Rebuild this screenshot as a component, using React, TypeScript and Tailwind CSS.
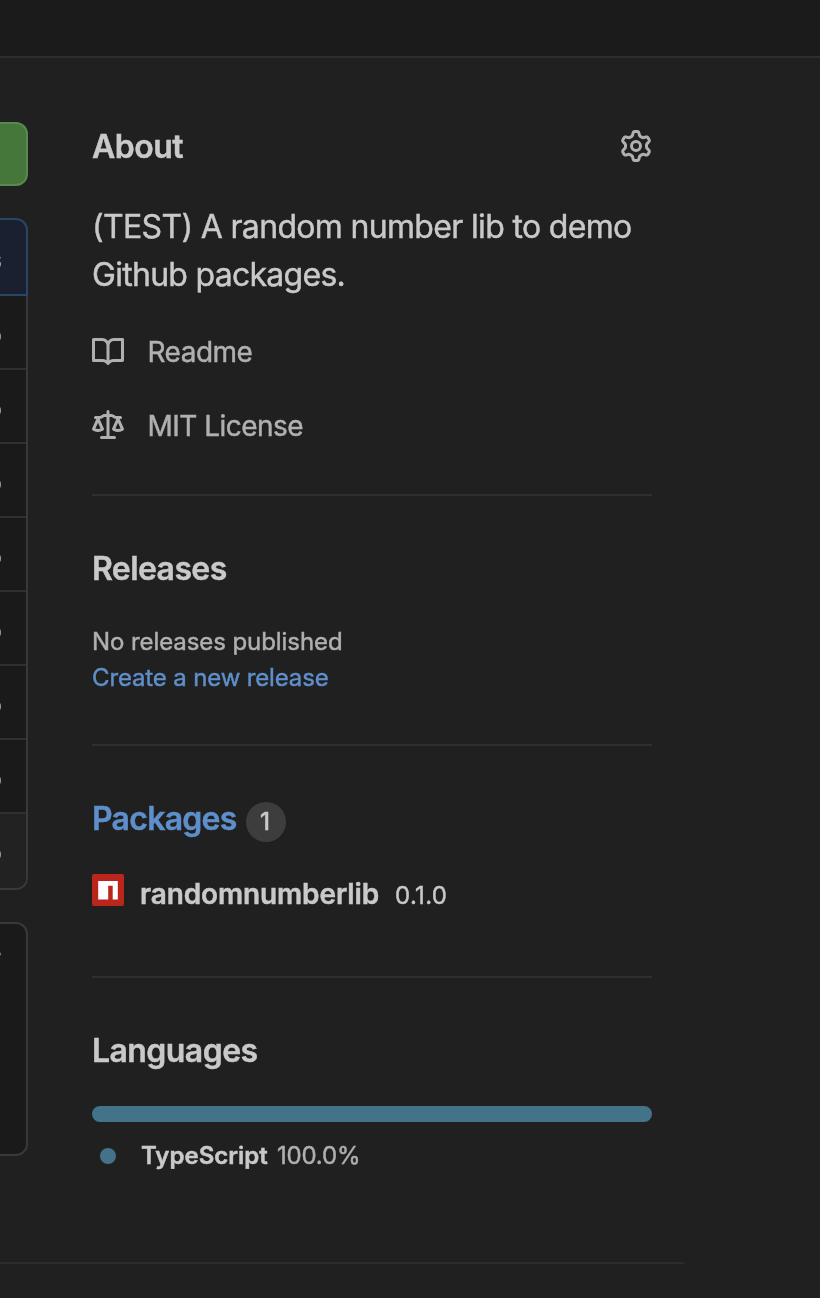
import type { ReactNode } from "react";

function Icon({ d, className }: { d: string; className?: string }) {
  return (
    <svg viewBox="0 0 16 16" className={`size-8 shrink-0 fill-[#b0b0b0] ${className ?? ""}`} fillRule="evenodd" aria-hidden="true">
      <path d={d} />
    </svg>
  );
}

const gear =
  "M7.429 1.525a6.593 6.593 0 011.142 0c.036.003.108.036.137.146l.289 1.105c.147.56.55.967.997 1.189.174.086.341.183.501.29.417.278.97.423 1.53.27l1.102-.303c.11-.03.175.016.195.046.219.31.41.641.573.989.014.031.022.11-.059.19l-.815.806c-.411.406-.562.957-.53 1.456a4.588 4.588 0 010 .582c-.032.499.119 1.05.53 1.456l.815.806c.08.08.073.159.059.19a6.494 6.494 0 01-.573.99c-.02.029-.086.074-.195.045l-1.103-.303c-.559-.153-1.112-.008-1.529.27-.16.107-.327.204-.5.29-.449.222-.851.628-.998 1.189l-.289 1.105c-.029.11-.101.143-.137.146a6.613 6.613 0 01-1.142 0c-.036-.003-.108-.037-.137-.146l-.289-1.105c-.147-.56-.55-.967-.997-1.189a4.502 4.502 0 01-.501-.29c-.417-.278-.97-.423-1.53-.27l-1.102.303c-.11.03-.175-.016-.195-.046a6.492 6.492 0 01-.573-.989c-.014-.031-.022-.11.059-.19l.815-.806c.411-.406.562-.957.53-1.456a4.587 4.587 0 010-.582c.032-.499-.119-1.05-.53-1.456l-.815-.806c-.08-.08-.073-.159-.059-.19a6.44 6.44 0 01.573-.99c.02-.029.086-.075.195-.045l1.103.303c.559.153 1.112.008 1.529-.27.16-.107.327-.204.5-.29.449-.222.851-.628.998-1.189l.289-1.105c.029-.11.101-.143.137-.146zM8 0c-.236 0-.47.01-.701.03-.743.065-1.29.615-1.458 1.261l-.29 1.106c-.017.066-.078.158-.211.224a5.994 5.994 0 00-.668.386c-.123.082-.233.09-.3.071L3.27 2.776c-.644-.177-1.392.02-1.82.63a7.977 7.977 0 00-.704 1.217c-.315.675-.111 1.422.363 1.891l.815.806c.05.048.098.147.088.294a6.084 6.084 0 000 .772c.01.147-.038.246-.088.294l-.815.806c-.474.469-.678 1.216-.363 1.891.2.428.436.835.704 1.218.428.609 1.176.806 1.82.63l1.103-.303c.066-.019.176-.011.299.071.213.143.436.272.668.386.133.066.194.158.212.224l.289 1.106c.169.646.715 1.196 1.458 1.26a8.094 8.094 0 001.402 0c.743-.064 1.29-.614 1.458-1.26l.29-1.106c.017-.066.078-.158.211-.224a5.98 5.98 0 00.668-.386c.123-.082.233-.09.3-.071l1.102.302c.644.177 1.392-.02 1.82-.63.268-.382.505-.789.704-1.217.315-.675.111-1.422-.364-1.891l-.814-.806c-.05-.048-.098-.147-.088-.294a6.1 6.1 0 000-.772c-.01-.147.039-.246.088-.294l.814-.806c.475-.469.679-1.216.364-1.891a7.992 7.992 0 00-.704-1.218c-.428-.609-1.176-.806-1.82-.63l-1.103.303c-.066.019-.176.011-.299-.071a5.991 5.991 0 00-.668-.386c-.133-.066-.194-.158-.212-.224L10.16 1.29C9.99.645 9.444.095 8.701.031A8.094 8.094 0 008 0zm1.5 8a1.5 1.5 0 11-3 0 1.5 1.5 0 013 0zM11 8a3 3 0 11-6 0 3 3 0 016 0z";

const book =
  "M0 1.75A.75.75 0 01.75 1h4.253c1.227 0 2.317.59 3 1.501A3.744 3.744 0 0111.006 1h4.245a.75.75 0 01.75.75v10.5a.75.75 0 01-.75.75h-4.507a2.25 2.25 0 00-1.591.659l-.622.621a.75.75 0 01-1.06 0l-.622-.621A2.25 2.25 0 005.258 13H.75a.75.75 0 01-.75-.75V1.75zm8.755 3a2.25 2.25 0 012.25-2.25H14.5v9h-3.757c-.71 0-1.4.201-1.992.572l.004-7.322zm-1.504 7.324l.004-5.073-.002-2.253A2.25 2.25 0 005.003 2.5H1.5v9h3.757a3.75 3.75 0 011.994.574z";

const law =
  "M8.75.75a.75.75 0 00-1.5 0V2h-.984c-.305 0-.604.08-.869.23l-1.288.737A.25.25 0 013.984 3H1.75a.75.75 0 000 1.5h.428L.066 9.192a.75.75 0 00.154.838l.53-.53-.53.53v.001l.002.002.002.002.006.006.016.015.045.04a3.514 3.514 0 00.686.45A4.492 4.492 0 003 11c.88 0 1.556-.22 2.023-.454a3.515 3.515 0 00.686-.45l.045-.04.016-.015.006-.006.002-.002.001-.002L5.25 9.5l.53.53a.75.75 0 00.154-.838L3.822 4.5h.162c.305 0 .604-.08.869-.23l1.289-.737a.25.25 0 01.124-.033h.984V13h-2.5a.75.75 0 000 1.5h6.5a.75.75 0 000-1.5h-2.5V3.5h.984a.25.25 0 01.124.033l1.29.736c.264.152.563.231.868.231h.162l-2.112 4.692a.75.75 0 00.154.838l.53-.53-.53.53v.001l.002.002.002.002.006.006.016.015.045.04a3.517 3.517 0 00.686.45A4.492 4.492 0 0013 11c.88 0 1.556-.22 2.023-.454a3.512 3.512 0 00.686-.45l.045-.04.01-.01.006-.005.006-.006.002-.002.001-.002-.529-.531.53.53a.75.75 0 00.154-.838L13.823 4.5h.427a.75.75 0 000-1.5h-2.234a.25.25 0 01-.124-.033l-1.29-.736A1.75 1.75 0 009.735 2H8.75V.75zM1.695 9.227c.285.135.718.273 1.305.273s1.02-.138 1.305-.273L3 6.327l-1.305 2.9zm10 0c.285.135.718.273 1.305.273s1.02-.138 1.305-.273L13 6.327l-1.305 2.9z";

function Section({ children, className }: { children: ReactNode; className: string }) {
  return <section className={`border-t-2 border-[#2e2e2e] pt-[49px] ${className}`}>{children}</section>;
}

const heading = "text-[32px] leading-12 font-semibold whitespace-nowrap";

function FileList() {
  return (
    <div className="mt-8 h-[672px] w-[228px] shrink-0 text-2xl text-[#b0b0b0]">
      <div className="flex h-[78px] items-center justify-end rounded-t-xl border-2 border-[#284768] bg-[#1b2030] pr-6 pt-1.5">
        commits
      </div>
      <div className="h-[594px] overflow-hidden rounded-b-xl border-2 border-t-0 border-[#393939] bg-[#1a1a1a]">
        {Array.from({ length: 8 }, (_, i) => (
          <div
            key={i}
            className="flex h-[74px] items-center justify-end border-b-2 border-[#303030] pt-1.5 pr-6 last:border-b-0 last:bg-[#222222] last:pt-1"
          >
            ago
          </div>
        ))}
      </div>
    </div>
  );
}

export default function App() {
  return (
    <div className="flex h-[1298px] w-[820px] flex-col overflow-hidden bg-[#202020] font-['Inter','Liberation_Sans',sans-serif] text-[#c9c9c9]">
      <header className="h-[58px] shrink-0 border-b-2 border-[#2d2d2d] bg-[#1b1b1b]" />
      <div className="flex h-[1206px] w-[684px] shrink-0 gap-16 border-b-2 border-[#2c2c2c] will-change-transform [-webkit-text-stroke:0.45px]">
        <main className="flex w-7 shrink-0 flex-col items-end overflow-hidden pt-16">
          <div className="h-16 w-[228px] shrink-0 rounded-xl border-2 border-[#598950] bg-[#447739]" />
          <FileList />
          <div className="mt-8 flex h-[234px] w-[228px] shrink-0 justify-end rounded-xl border-2 border-[#393939] bg-[#1a1a1a] pt-7 pr-[25px]">
            <span className="h-1 w-2 rounded-full bg-[#7a7a7a]" />
          </div>
        </main>
        <aside className="w-[560px] shrink-0">
          <section className="h-[436px] pt-[65px]">
            <div className="flex h-12 items-start justify-between">
              <h2 className={`${heading} tracking-[-0.5px]`}>About</h2>
              <Icon d={gear} className="mt-[7px]" />
            </div>
            <p className="mt-8 text-[32px] leading-12 whitespace-nowrap tracking-[-0.67px]">
              (TEST) A random number lib to demo
              <br />
              <span className="tracking-[-0.72px]">Github packages.</span>
            </p>
            <div className="mt-8 flex h-[42px] gap-6 text-[#b0b0b0]">
              <Icon d={book} className="mt-[5px]" />
              <span className="-ml-[0.5px] text-[28px] leading-[42px] tracking-[-0.5px]">Readme</span>
            </div>
            <div className="mt-8 flex h-[42px] gap-6 text-[#b0b0b0]">
              <Icon d={law} className="mt-[5px]" />
              <span className="-ml-[0.5px] text-[28px] leading-[42px] tracking-[-0.53px]">MIT License</span>
            </div>
          </section>
          <Section className="h-[250px]">
            <h2 className={`${heading} tracking-[-0.6px]`}>Releases</h2>
            <div className="mt-8 text-2xl leading-9">
              <p className="-mt-px tracking-[-0.08px] text-[#b0b0b0]">No releases published</p>
              <a className="tracking-[-0.14px] text-[#5e8fcb]">Create a new release</a>
            </div>
          </Section>
          <Section className="h-[232px]">
            <div className="flex h-12">
              <h2 className={`${heading} w-[154px] tracking-[-0.74px] text-[#5e8fcb]`}>Packages</h2>
              <span className="mt-[7px] flex size-10 items-center justify-center rounded-full bg-[#3d3d3d] pr-0.5 text-2xl leading-10 font-medium text-[#c9c9c9]">
                1
              </span>
            </div>
            <div className="mt-[31px] flex h-10">
              <svg viewBox="0 0 32 32" className="size-8 shrink-0" aria-hidden="true">
                <rect width="32" height="32" rx="2" fill="#ba261b" />
                <path fill="#fff" d="M6.2 7h19.6v18.6h-5.1V11.7h-4.5v13.9h-10z" />
              </svg>
              <span className="ml-4 w-[239px] text-[28px] leading-10 font-semibold tracking-[-0.13px]">randomnumberlib</span>
              <span className="ml-4 text-2xl leading-[44px] tracking-[0.35px]">0.1.0</span>
            </div>
          </Section>
          <Section className="h-[286px]">
            <h2 className={`${heading} tracking-[-0.56px]`}>Languages</h2>
            <div className="mt-[31px] h-4 rounded-full bg-[#427388]" />
            <div className="mt-4 flex h-9 items-start pl-2 text-2xl leading-9">
              <span className="mt-2.5 size-4 rounded-full bg-[#427388]" />
              <span className="ml-[25px] w-[128px] font-semibold">TypeScript</span>
              <span className="ml-2 tracking-[-0.2px] text-[#b0b0b0]">100.0%</span>
            </div>
          </Section>
        </aside>
      </div>
    </div>
  );
}
